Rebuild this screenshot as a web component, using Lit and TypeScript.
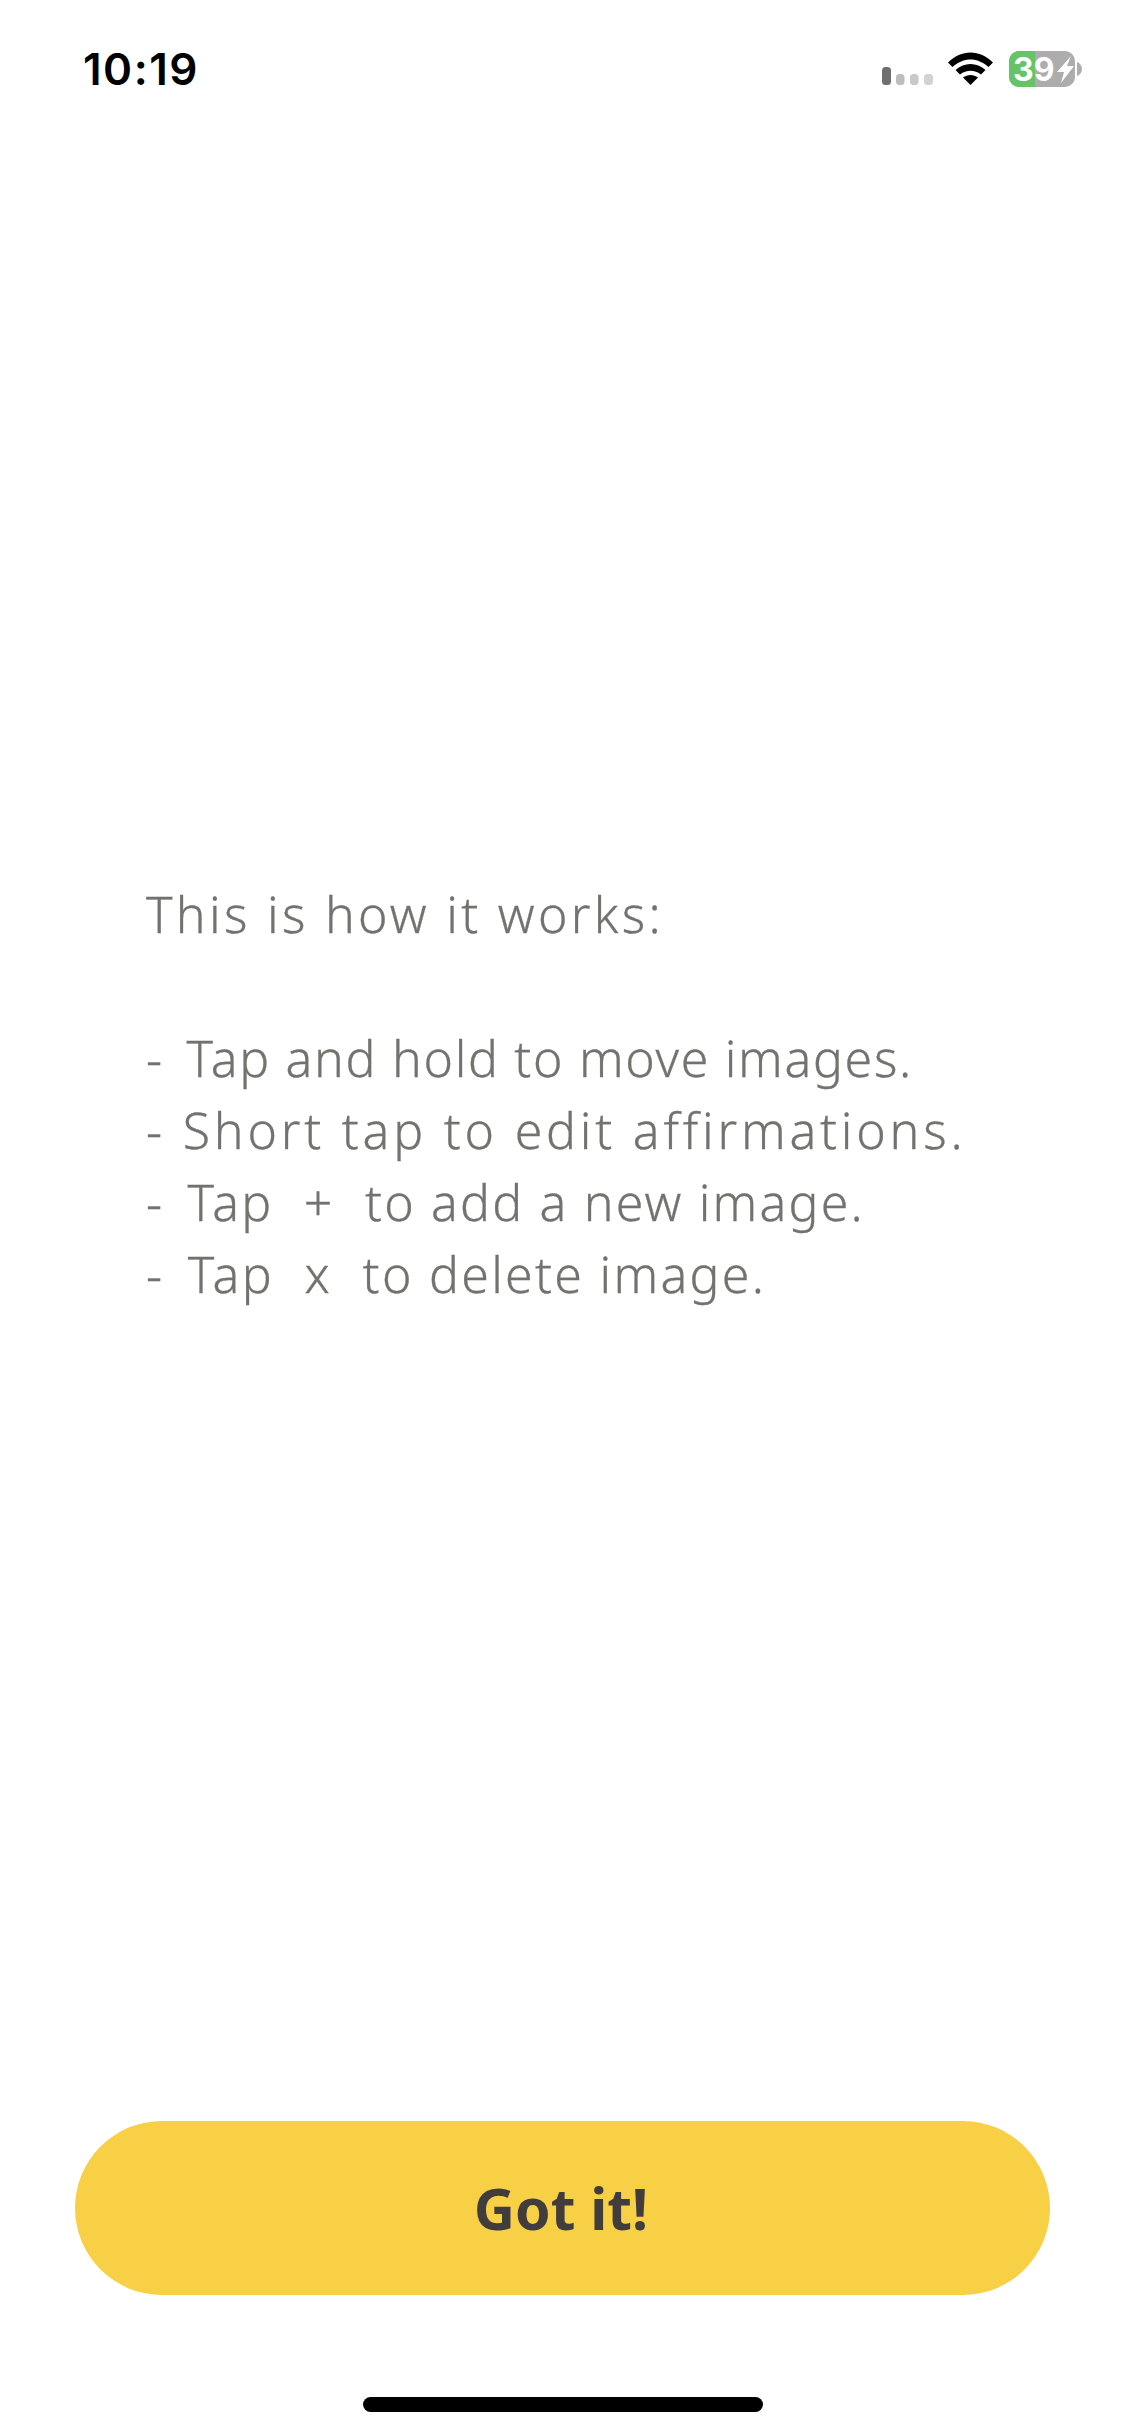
import { LitElement, html, css } from "lit";
import { customElement } from "lit/decorators.js";

@customElement("app-root")
export class AppRoot extends LitElement {
  static styles = css`
    :host { display: block; width: 1125px; height: 2436px; background: #fff; overflow: hidden; }
    .page { height: 2436px; display: flex; flex-direction: column; box-sizing: border-box; }
    .status { display: flex; align-items: flex-start; justify-content: space-between; height: 100px; padding: 44px 43px 0 83px; box-sizing: border-box; flex: none; }
    .time { font: 600 44px/50px Inter, "Liberation Sans", sans-serif; color: #000; letter-spacing: 1.5px; }
    .icons { display: flex; align-items: flex-start; padding-top: 7px; }
    .main { flex: 1; min-height: 0; padding: 778px 0 0 146px; box-sizing: border-box; }
    .copy { margin: 0; font: 300 50px/72px "Noto Sans", "Open Sans", sans-serif; color: #72726e; white-space: pre; -webkit-text-stroke: 0.3px #72726e; }
    .copy .line { display: block; min-height: 72px; }
    .dash { margin-right: 8px; }
    .l1 { letter-spacing: 3.3px; }
    .l3 { letter-spacing: 1.7px; }
    .l4 { letter-spacing: 3.8px; }
    .l5 { letter-spacing: 2.2px; }
    .l6 { letter-spacing: 2.3px; }
    .btn { flex: none; height: 174px; margin: 0 75px; border: 0; padding: 0 3px 0 0; border-radius: 87px; background: #f7d046; color: #413d3d; font: 700 57px "Noto Sans", sans-serif; }
    .homewrap { flex: none; height: 141px; display: flex; justify-content: center; align-items: flex-start; padding-top: 102px; box-sizing: border-box; }
    .home { width: 400px; height: 15px; border-radius: 8px; background: #000; }
    svg { display: block; }
  `;

  render() {
    return html`<div class="page">
      <div class="status">
        <span class="time">10:19</span>
        <div class="icons">
          <svg width="200" height="40" viewBox="882 51 200 40">
            <rect x="882" y="67" width="9" height="18" rx="3.5" fill="#6f6f6f"/>
            <rect x="896" y="74" width="8.5" height="11" rx="3.5" fill="#bdbdbd"/>
            <rect x="910" y="74" width="8.5" height="11" rx="3.5" fill="#c8c8c8"/>
            <rect x="924" y="74" width="9" height="11" rx="3.5" fill="#d2d2d2"/>
            <path d="M948 62.5 C961 49 980 49 993 62.5 L988.5 67 C977.5 57 963.5 57 952.5 67 Z" fill="#000"/>
            <path d="M955.5 70 C964 62 977 62 985.5 70 L981 74.5 C974.5 69.5 966.5 69.5 960 74.5 Z" fill="#000"/>
            <path d="M963 77.5 C967.5 74 973.5 74 978 77.5 L970.5 85 Z" fill="#000"/>
            <rect x="1009" y="51" width="66" height="36" rx="10" fill="#adadad"/>
            <path d="M1019 51 H1035 V87 H1019 A10 10 0 0 1 1009 77 V61 A10 10 0 0 1 1019 51 Z" fill="#66c466"/>
            <path d="M1077 62 C1080 63 1082 66 1082 69 C1082 72 1080 75 1077 76 Z" fill="#adadad"/>
            <text x="1013" y="81" font-family="Inter, 'Liberation Sans', sans-serif" font-weight="700" font-size="32" fill="#fff">39</text>
            <path d="M1071 56 L1057 72 H1064 L1061 83 L1074 66 H1067 Z" fill="#fff"/>
          </svg>
        </div>
      </div>
      <div class="main">
        <p class="copy"><span class="line l1">This is how it works:</span><span class="line"></span><span class="line l3"><span class="dash">-</span> Tap and hold to move images.</span><span class="line l4">- Short tap to edit affirmations.</span><span class="line l5"><span class="dash">-</span> Tap  +  to add a new image.</span><span class="line l6"><span class="dash">-</span> Tap  x  to delete image.</span></p>
      </div>
      <button class="btn">Got it!</button>
      <div class="homewrap"><div class="home"></div></div>
    </div>`;
  }
}
